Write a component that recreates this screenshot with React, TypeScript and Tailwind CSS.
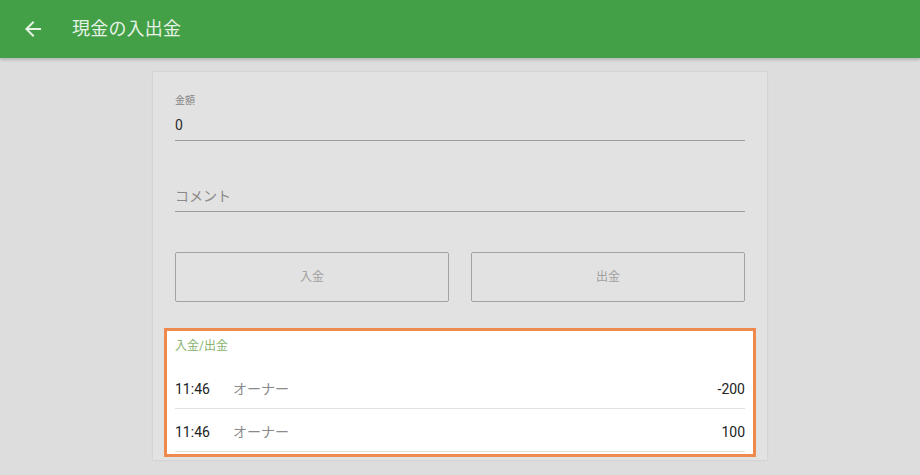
const font = { fontFamily: 'Roboto, "Noto Sans CJK JP", sans-serif' }

type Entry = { time: string; name: string; amount: string }

const entries: Entry[] = [
  { time: '11:46', name: 'オーナー', amount: '-200' },
  { time: '11:46', name: 'オーナー', amount: '100' },
]

function BackIcon() {
  return (
    <svg width="24" height="24" viewBox="0 0 24 24" className="fill-[#e8f3e8]">
      <path d="M20 11H7.83l5.59-5.59L12 4l-8 8 8 8 1.41-1.41L7.83 13H20v-2z" />
    </svg>
  )
}

export default function App() {
  return (
    <div className="w-[920px] h-[475px] overflow-hidden bg-[#dddddd]" style={font}>
      <header className="h-[58px] bg-[#43a047] flex items-center pl-[21px] shadow-[0_2px_3px_rgba(0,0,0,0.18)] relative">
        <BackIcon />
        <h1 className="ml-[27px] text-[18px] leading-none text-[#e6f2e6] tracking-[0.2px]">現金の入出金</h1>
      </header>

      <main className="mx-auto mt-[14px] w-[614px] bg-[#e2e2e2] px-[22px] pt-[23px] pb-[3px] shadow-[0_0_2px_rgba(0,0,0,0.12)]">
        <div>
          <p className="text-[10px] leading-[12px] text-[#858585]">金額</p>
          <div className="mt-[8px] pb-[5px] border-b border-[#9a9a9a] text-[14px] leading-[20px] text-[#2a2a2a]">0</div>
        </div>

        <div className="mt-[45px] pb-[5px] border-b border-[#9a9a9a] text-[14px] leading-[20px] text-[#8a8a8a]">
          コメント
        </div>

        <div className="mt-[40px] grid grid-cols-2 gap-[22px]">
          <button className="h-[50px] border border-[#a2a2a2] rounded-[2px] text-[12px] text-[#a0a0a0]">入金</button>
          <button className="h-[50px] border border-[#a2a2a2] rounded-[2px] text-[12px] text-[#a0a0a0]">出金</button>
        </div>

        <section className="mt-[26px] -mx-[11px] border-[3px] border-[#ee8a4e] bg-white px-[8px] pb-[2px]">
          <div className="h-[35px] pt-[7px] text-[12px] leading-[16px] text-[#86b46c]">入金/出金</div>
          {entries.map((e, i) => (
            <div key={i} className="h-[43px] pt-[5px] flex items-center border-b border-[#e2e2e2] text-[14px]">
              <span className="w-[58px] text-[#222222]">{e.time}</span>
              <span className="text-[#8a8a8a]">{e.name}</span>
              <span className="ml-auto text-[#222222]">{e.amount}</span>
            </div>
          ))}
        </section>
      </main>
    </div>
  )
}
